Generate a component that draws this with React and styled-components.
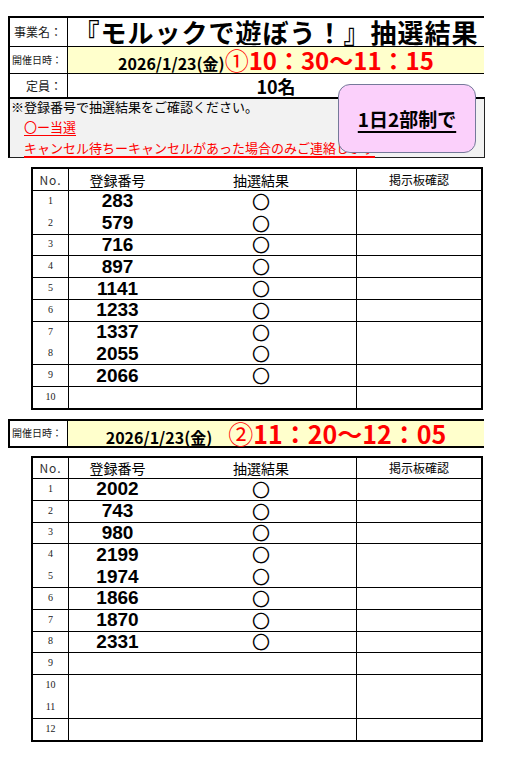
import React from 'react';
import styled, { createGlobalStyle } from 'styled-components';

const Global = createGlobalStyle`
  html, body { margin: 0; padding: 0; background: #fff; }
  body { font-family: "Noto Sans CJK JP", "Noto Sans", sans-serif; color: #000; }
`;

const Page = styled.div`
  width: 517px;
  box-sizing: border-box;
  padding: 16px 0 20px 8px;
`;

const Sheet = styled.div`
  position: relative;
  width: 477px;
`;

const InfoBlock = styled.div`
  width: 476px;
  margin-top: ${p => p.$mt || 0}px;
  border-top: 2px solid #000;
  border-bottom: ${p => (p.$bottom ? '2px solid #000' : 'none')};
`;

const InfoRow = styled.div`
  display: flex;
  height: ${p => p.$h}px;
  border-bottom: ${p => (p.$line ? '1px solid #000' : 'none')};
`;

const Label = styled.div`
  width: 60px;
  flex: none;
  box-sizing: border-box;
  border-left: 2px solid #000;
  border-right: 1px solid #000;
  display: flex;
  align-items: center;
  justify-content: flex-end;
  padding-right: 5px;
  font-size: ${p => p.$size || 12}px;
  line-height: 1;
  color: #1a1a1a;
  white-space: nowrap;
`;

const Value = styled.div`
  flex: 1;
  display: flex;
  align-items: center;
  justify-content: center;
  background: ${p => p.$bg || 'transparent'};
  white-space: nowrap;
`;

const Title = styled.span`
  display: inline-block;
  font-size: 26px;
  font-weight: 700;
  letter-spacing: 1px;
  line-height: 1;
`;

const DateLine = styled.div`
  display: flex;
  align-items: baseline;
  line-height: 1;
`;

const DateText = styled.span`
  display: inline-block;
  font-size: 16px;
  font-weight: 700;
  white-space: pre;
`;

const TimeText = styled.span`
  display: inline-block;
  font-size: ${p => p.$size}px;
  font-weight: 700;
  color: #ff0000;
`;

const Circled = styled.span`
  font-weight: 400;
`;

const Capacity = styled.span`
  display: inline-block;
  font-size: 18px;
  font-weight: 700;
  line-height: 1;
`;

const Note = styled.div`
  width: 477px;
  height: 61px;
  box-sizing: border-box;
  background: #f2f2f2;
  border: 1px solid #222;
  border-top: 2px solid #000;
  border-left: 2px solid #000;
  font-size: 13px;
`;

const NoteLine = styled.div`
  height: ${p => p.$h}px;
  line-height: ${p => p.$h}px;
  padding-left: ${p => p.$indent}px;
  color: ${p => (p.$red ? '#ff0000' : '#000')};
  white-space: nowrap;
`;

const Under = styled.span`
  text-decoration: underline;
  text-decoration-color: #ff0000;
  text-underline-offset: ${p => p.$off}px;
  text-decoration-thickness: ${p => p.$th}px;
`;

const Callout = styled.div`
  position: absolute;
  left: 330px;
  top: 68px;
  width: 138px;
  height: 69px;
  box-sizing: border-box;
  background: #fbd0fb;
  border: 1.5px solid #75799a;
  border-radius: 12px;
  display: flex;
  align-items: center;
  justify-content: center;
  font-size: 19px;
  font-weight: 700;
  line-height: 1;
  text-decoration: underline;
  text-underline-offset: 4px;
  text-decoration-thickness: 1.5px;
`;

const Table = styled.div`
  width: 452px;
  box-sizing: border-box;
  margin: ${p => p.$mt}px 0 0 23px;
  border: 2px solid #000;
`;

const Row = styled.div`
  display: grid;
  grid-template-columns: 36px 97px 191px 1fr;
  height: ${p => p.$h}px;
  box-shadow: ${p => (p.$line ? 'inset 0 1px 0 #000' : 'none')};
`;

const Cell = styled.div`
  display: flex;
  align-items: center;
  justify-content: center;
  border-right: ${p => (p.$divider ? '1px solid #000' : 'none')};
  font-size: ${p => p.$size}px;
  font-weight: ${p => p.$weight || 400};
  color: ${p => p.$color || '#000'};
  letter-spacing: ${p => p.$ls || 0}px;
  line-height: 1;
  font-family: ${p => p.$font || 'inherit'};
`;

function LotteryTable({ mt, headH, entries, noLine }) {
  return (
    <Table $mt={mt}>
      <Row $h={headH}>
        <Cell $divider $size={12} $color="#333" $ls={1}>No.</Cell>
        <Cell $size={14}>登録番号</Cell>
        <Cell $divider $size={14}>抽選結果</Cell>
        <Cell $size={12}>掲示板確認</Cell>
      </Row>
      {entries.map((n, i) => (
        <Row key={i} $h={21.8} $line={!noLine.includes(i)}>
          <Cell $divider $size={10} $color="#222" $font={'"Liberation Serif", serif'}>{i + 1}</Cell>
          <Cell $size={19} $weight={700} $font={'"Liberation Sans", Arial, sans-serif'}>{n ?? ''}</Cell>
          <Cell $divider $size={18}>{n ? '〇' : ''}</Cell>
          <Cell />
        </Row>
      ))}
    </Table>
  );
}

const table1 = [283, 579, 716, 897, 1141, 1233, 1337, 2055, 2066, null];
const table2 = [2002, 743, 980, 2199, 1974, 1866, 1870, 2331, null, null, null, null];

export default function App() {
  return (
    <>
      <Global />
      <Page>
        <Sheet>
          <InfoBlock>
            <InfoRow $h={28} $line>
              <Label>事業名：</Label>
              <Value><Title>『モルックで遊ぼう！』抽選結果</Title></Value>
            </InfoRow>
            <InfoRow $h={26} $line>
              <Label $size={10}>開催日時：</Label>
              <Value $bg="#ffffcc">
                <DateLine>
                  <DateText>2026/1/23(金)</DateText>
                  <TimeText $size={24}><Circled>①</Circled>10：30～11：15</TimeText>
                </DateLine>
              </Value>
            </InfoRow>
            <InfoRow $h={23}>
              <Label>定員：</Label>
              <Value><Capacity>10名</Capacity></Value>
            </InfoRow>
          </InfoBlock>
          <Note>
            <NoteLine $h={16} $indent={1}>※登録番号で抽選結果をご確認ください。</NoteLine>
            <NoteLine $h={24} $indent={14} $red>
              <Under $off={3} $th={1}>〇ー当選</Under>
            </NoteLine>
            <NoteLine $h={18} $indent={14} $red>
              <Under $off={3} $th={2}>キャンセル待ちーキャンセルがあった場合のみご連絡します</Under>
            </NoteLine>
          </Note>
          <Callout>1日2部制で</Callout>

          <LotteryTable mt={9} headH={21} entries={table1} noLine={[1, 7]} />

          <InfoBlock $bottom $mt={9}>
            <InfoRow $h={25}>
              <Label $size={10}>開催日時：</Label>
              <Value $bg="#ffffcc">
                <DateLine>
                  <DateText>2026/1/23(金)　</DateText>
                  <TimeText $size={25}><Circled>②</Circled>11：20～12：05</TimeText>
                </DateLine>
              </Value>
            </InfoRow>
          </InfoBlock>

          <LotteryTable mt={8} headH={20} entries={table2} noLine={[4, 10]} />
        </Sheet>
      </Page>
    </>
  );
}
